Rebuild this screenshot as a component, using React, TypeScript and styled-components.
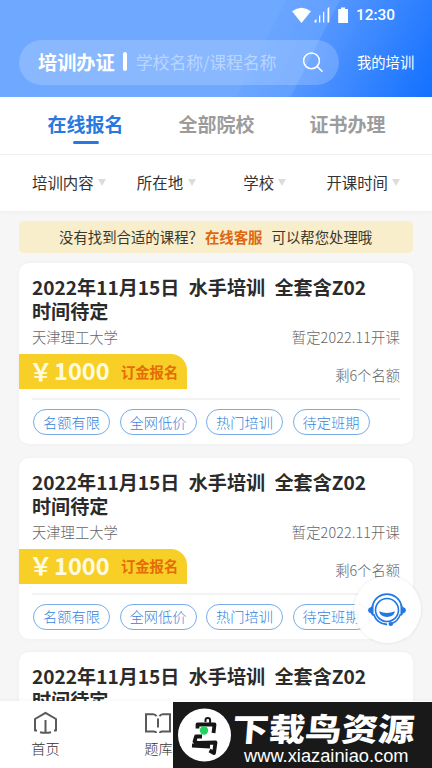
import React from "react";
import styled, { createGlobalStyle, css } from "styled-components";

const GlobalStyle = createGlobalStyle`
  * { box-sizing: border-box; }
  body { margin: 0; font-family: "Noto Sans CJK SC", sans-serif; color: #2d2d2d; background: #f6f6f6; }
`;

const Screen = styled.div`
  position: relative;
  width: 432px;
  height: 768px;
  display: flex;
  flex-direction: column;
  overflow: hidden;
  background: #f6f6f6;
  white-space: nowrap;
`;

const Header = styled.header`
  flex: none;
  height: 97px;
  background:
    linear-gradient(117deg, #6ea8ff 0 59.3%, rgba(112, 170, 255, 0.5) 59.5% 70.5%, transparent 70.7%),
    linear-gradient(117deg, #6ea8ff 52%, #4f93ff 73%, #0c6cff 103%);
`;

const StatusBar = styled.div`
  height: 40px;
  padding: 0 37px 10px 0;
  display: flex;
  align-items: center;
  justify-content: flex-end;
  color: #fff;
`;

const StatusIcons = styled.svg`
  width: 58px;
  height: 18px;
  margin-right: 7px;
`;

const Clock = styled.span`
  font: 500 15.4px/18px Roboto, sans-serif;
`;

const SearchRow = styled.div`
  display: flex;
  align-items: center;
  padding-left: 19px;
  color: #fff;
`;

const SearchBox = styled.div`
  width: 320px;
  height: 45px;
  border-radius: 23px;
  padding: 0 15px 2px 19px;
  display: flex;
  align-items: center;
  background: rgba(255, 255, 255, 0.19);
`;

const SearchTitle = styled.span`
  width: 85px;
  font-size: 19.2px;
  font-weight: 700;
`;

const SearchDivider = styled.i`
  width: 4px;
  height: 19px;
  margin-right: 9px;
  border-radius: 2px;
  background: #fff;
`;

const Placeholder = styled.span`
  flex: 1;
  font-size: 16.75px;
  color: #b9d6ff;
`;

const SearchGlyph = styled.svg`
  width: 22px;
  height: 22px;
`;

const MyTraining = styled.span`
  margin: -2px 0 0 18px;
  font-size: 14.3px;
`;

const Tabs = styled.nav`
  flex: none;
  height: 58px;
  padding: 0 20px;
  display: grid;
  grid-template-columns: 131px 131px 131px;
  background: #fff;
  border-bottom: 1.5px solid #f1f1f1;
`;

const Tab = styled.div<{ $active?: boolean }>`
  display: flex;
  flex-direction: column;
  align-items: center;
  padding-top: 13px;
  font-size: 19px;
  line-height: 28px;
  font-weight: 700;
  color: ${(p) => (p.$active ? "#2879df" : "#9c9c9c")};
  ${(p) =>
    p.$active &&
    css`
      &::after {
        content: "";
        width: 26px;
        height: 3px;
        margin-top: 3px;
        border-radius: 2px;
        background: #2879df;
      }
    `}
`;

const Filters = styled.div`
  flex: none;
  height: 56px;
  padding: 0 32px 2px 32px;
  display: flex;
  align-items: center;
  justify-content: space-between;
  background: #fff;
  box-shadow: 0 1px 4px rgba(0, 0, 0, 0.04);
`;

const Filter = styled.div<{ $gap: number; $after?: number }>`
  display: flex;
  align-items: center;
  gap: ${(p) => p.$gap}px;
  margin-right: ${(p) => p.$after ?? 0}px;
  font-size: 15.4px;
  color: #333;
  &::after {
    content: "";
    border: 4.5px solid transparent;
    border-top: 7px solid #dcdcdc;
    border-bottom: 0;
  }
`;

const Content = styled.main`
  flex: 1;
  min-height: 0;
  overflow: hidden;
  padding: 10px 19px 0;
`;

const Notice = styled.div`
  height: 32px;
  margin-bottom: 10px;
  padding: 0 0 1px 40px;
  display: flex;
  align-items: center;
  border-radius: 5px;
  background: #f8eecb;
  font-size: 14.4px;
  color: #3a372e;
`;

const NoticeLink = styled.b`
  margin: 0 9px 0 2px;
  font-weight: 700;
  color: #de6710;
`;

const Card = styled.article`
  height: 181px;
  margin-bottom: 13.5px;
  padding: 12px 13px 0;
  border-radius: 10px;
  background: #fff;
  box-shadow: 0 0 5px rgba(0, 0, 0, 0.035);
`;

const CardTitle = styled.h2`
  height: 49px;
  margin: 0;
  font-size: 19.1px;
  line-height: 24px;
  font-weight: 700;
  color: #2b2b2b;
  white-space: pre-line;
  word-spacing: 5px;
`;

const CourseMeta = styled.div`
  height: 30px;
  padding-bottom: 5px;
  display: flex;
  align-items: center;
  justify-content: space-between;
  font-size: 14.3px;
  font-weight: 300;
  color: #666;
`;

const CourseDate = styled.span`
  letter-spacing: 0.15px;
`;

const PriceRow = styled.div`
  height: 35px;
  display: flex;
  align-items: center;
  justify-content: space-between;
  font-size: 14.3px;
  font-weight: 300;
  color: #666;
`;

const Price = styled.div`
  width: 168px;
  height: 35px;
  margin-left: -13px;
  padding-left: 10px;
  display: flex;
  align-items: center;
  border-radius: 0 16px 0 0;
  background: #f8cf26;
  color: #fffbe0;
  font-size: 23.6px;
  line-height: 34px;
  font-weight: 700;
`;

const Currency = styled.span`
  width: 25px;
  margin-top: -2px;
`;

const Amount = styled.span`
  width: 56px;
  margin-top: -3px;
`;

const Deposit = styled.span`
  margin-left: 11px;
  font-size: 14.3px;
  font-weight: 700;
  color: #e56b07;
`;

const Seats = styled.span`
  padding-top: 6px;
`;

const Tags = styled.div`
  display: flex;
  gap: 9.5px;
  margin-top: 9px;
  padding: 9px 0 0 1px;
  border-top: 2px solid #f3f3f3;
`;

const Tag = styled.span`
  width: 77px;
  height: 26px;
  padding-bottom: 1px;
  display: flex;
  align-items: center;
  justify-content: center;
  border: 1px solid #77ace9;
  border-radius: 13px;
  font-size: 14.2px;
  font-weight: 300;
  color: #3583dd;
`;

const SupportButton = styled.button`
  position: absolute;
  left: 354px;
  top: 576px;
  width: 67px;
  height: 67px;
  padding: 0 1px 0 0;
  border: 0;
  border-radius: 50%;
  display: flex;
  align-items: center;
  justify-content: center;
  background: rgba(255, 255, 255, 0.9);
  box-shadow: 0 0 3px rgba(0, 0, 0, 0.12);
`;

const BottomBar = styled.footer`
  flex: none;
  height: 67px;
  padding: 10px 0 0 31px;
  display: flex;
  gap: 84px;
  background: #fff;
  box-shadow: 0 -1px 3px rgba(60, 100, 150, 0.05);
`;

const NavItem = styled.div`
  width: 29px;
  display: flex;
  flex-direction: column;
  align-items: center;
  font-size: 14.2px;
  line-height: 20px;
  font-weight: 300;
  color: #333;
  svg { flex: none; margin: 0 2px 3px 0; }
`;

const SiteBadge = styled.div`
  position: absolute;
  left: 173px;
  top: 702px;
  width: 259px;
  height: 66px;
  padding-left: 4px;
  display: flex;
  background: #191919;
  color: #fff;
`;

const SiteLogo = styled.svg`
  flex: none;
  width: 54px;
  height: 66px;
`;

const SiteText = styled.div`
  display: flex;
  flex-direction: column;
  align-items: flex-start;
  padding-left: 1px;
`;

const SiteName = styled.div`
  height: 43px;
  margin-left: 1px;
  font-size: 36.4px;
  line-height: 52px;
  font-weight: 900;
  transform: scaleY(0.87) skewX(-4deg);
`;

const SiteUrl = styled.div`
  margin-left: 12px;
  font: 18.3px/21px "Liberation Sans", Arial, sans-serif;
`;

const tags = ["名额有限", "全网低价", "热门培训", "待定班期"];
const courses = [1, 2, 3];

function CourseCard() {
  return (
    <Card>
      <CardTitle>{"2022年11月15日 水手培训 全套含Z02\n时间待定"}</CardTitle>
      <CourseMeta>
        <span>天津理工大学</span>
        <CourseDate>暂定2022.11开课</CourseDate>
      </CourseMeta>
      <PriceRow>
        <Price>
          <Currency>￥</Currency>
          <Amount>1000</Amount>
          <Deposit>订金报名</Deposit>
        </Price>
        <Seats>剩6个名额</Seats>
      </PriceRow>
      <Tags>
        {tags.map((t) => (
          <Tag key={t}>{t}</Tag>
        ))}
      </Tags>
    </Card>
  );
}

export default function App() {
  return (
    <>
      <GlobalStyle />
      <Screen>
        <Header>
          <StatusBar>
            <StatusIcons viewBox="0 0 58 18" fill="#fff">
              <path d="M1 5.2Q10.5-1.8 20 5.2L10.5 17Z" />
              <path d="M23.5 16.5v-2l2-1.500v3.500zM28 16.500v-6.500l1.300-1.200v7.700zM32 16.500v-10l1.300-1.200v11.200zM36.500 16.500v-14l1.800-1.800v15.800z" />
              <path d="M50 1.500h4v1.500h3v14h-9.800v-14h2.800z" />
            </StatusIcons>
            <Clock>12:30</Clock>
          </StatusBar>
          <SearchRow>
            <SearchBox>
              <SearchTitle>培训办证</SearchTitle>
              <SearchDivider />
              <Placeholder>学校名称/课程名称</Placeholder>
              <SearchGlyph viewBox="0 0 22 22" fill="none" stroke="#fff" strokeWidth="1.5" strokeLinecap="round">
                <circle cx="9.500" cy="9.800" r="7.900" />
                <path d="M15.300 15.500l4.700 4.700" />
              </SearchGlyph>
            </SearchBox>
            <MyTraining>我的培训</MyTraining>
          </SearchRow>
        </Header>
        <Tabs>
          <Tab $active>在线报名</Tab>
          <Tab>全部院校</Tab>
          <Tab>证书办理</Tab>
        </Tabs>
        <Filters>
          <Filter $gap={4}>培训内容</Filter>
          <Filter $gap={5} $after={16}>所在地</Filter>
          <Filter $gap={4} $after={9}>学校</Filter>
          <Filter $gap={4}>开课时间</Filter>
        </Filters>
        <Content>
          <Notice>
            没有找到合适的课程？<NoticeLink>在线客服</NoticeLink>可以帮您处理哦
          </Notice>
          {courses.map((c) => (
            <CourseCard key={c} />
          ))}
        </Content>
        <BottomBar>
          <NavItem>
            <svg width="24" height="24" viewBox="0 0 24 24" fill="none" stroke="#5a5a5a" strokeWidth="2" strokeLinejoin="round">
              <path d="M4 19.500H2V8L12.500 1.800 23 8v11.500h-2M12.500 9v12M7 21.200q5.500 1.200 11 0" />
            </svg>
            首页
          </NavItem>
          <NavItem>
            <svg width="28" height="24" viewBox="0 0 28 24" fill="none" stroke="#5a5a5a" strokeWidth="2">
              <path d="M12 22q0-1.500-2-1.500H2V3.200h7q2.500 0 3.500 2M16 22q0-1.500 2-1.500h8V3.200h-7q-2.500 0-3.500 2M14 7.500v9" />
            </svg>
            题库
          </NavItem>
        </BottomBar>
        <SupportButton aria-label="在线客服">
          <svg width="40" height="34" viewBox="0 0 40 34" fill="none" stroke="#2177e4">
            <circle cx="20" cy="17" r="11.500" strokeWidth="1.600" />
            <path d="M5.500 13C9-2.800 31-2.800 34.500 13M6.500 21Q10 31 20 31.500" strokeWidth="1.800" />
            <path d="M6.500 11.500q-2 .5-2.500 2.500-3 1-3 3.200T4 20.500q.5 2 2.500 2.500zM33.500 11.500q2 .5 2.500 2.500 3 1 3 3.200t-3 3.300q-.5 2-2.500 2.500z" fill="#2177e4" stroke="none" />
            <path d="M33.500 21q-2.500 7.500-9 9.500" strokeWidth="1.500" />
            <ellipse cx="23.800" cy="31" rx="2.300" ry="1.900" fill="#2177e4" stroke="none" />
            <path d="M12 18.300q8 3.200 16 0-1.500 5.700-8 5.700t-8-5.700z" fill="#2177e4" stroke="none" />
          </svg>
        </SupportButton>
        <SiteBadge>
          <SiteLogo viewBox="0 0 54 66">
            <circle cx="27.500" cy="33" r="26.500" fill="#fff" />
            <g fill="none" stroke="#161616" strokeWidth="3.800" strokeLinejoin="round">
              <path d="M28.500 20v-2q0-2 2.300-2t2.300 2v3" strokeWidth="2" />
              <path d="M20.500 26.500v-4h17l-1 8.500" />
              <path d="M25 34.500h-6l-1.500 5 3 1.500 18-.5-1.500 10.500-4.500-2.500M15 43.500l18 1" />
            </g>
            <circle cx="27" cy="28.500" r="4.200" fill="#20d45c" />
          </SiteLogo>
          <SiteText>
            <SiteName>下载鸟资源</SiteName>
            <SiteUrl>www.xiazainiao.com</SiteUrl>
          </SiteText>
        </SiteBadge>
      </Screen>
    </>
  );
}
